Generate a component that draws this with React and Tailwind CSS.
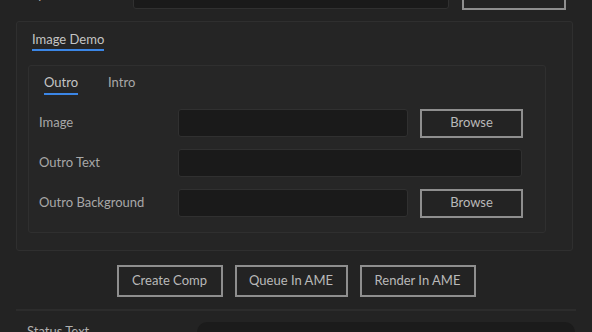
import React from "react";

const font = { fontFamily: "Lato, 'Noto Sans', sans-serif" };

function Btn({ children, className = "" }) {
  return (
    <div
      className={`flex items-center justify-center border-2 border-[#8e8e8e] bg-[#232323] text-[13px] text-[#b9b9b9] ${className}`}
    >
      {children}
    </div>
  );
}

function Input({ className = "" }) {
  return <div className={`h-[28px] rounded-[3px] border border-[#303030] bg-[#1a1a1a] ${className}`} />;
}

export default function App() {
  return (
    <div className="h-[332px] w-[592px] overflow-hidden bg-[#232323]" style={font}>
      {/* top row (cut off) */}
      <div className="mt-[-19px] flex h-[28px] items-center pl-[16px]">
        <div className="w-[117px] text-[13px] text-[#b0b0b0]">Output File</div>
        <Input className="w-[316px]" />
        <Btn className="ml-[13px] h-[30px] w-[104px]">Browse</Btn>
      </div>

      {/* group box */}
      <div className="ml-[16px] mt-[12px] h-[230px] w-[557px] rounded-[3px] border border-[#2f2f2f] bg-[#252525]">
        <div className="flex pl-[15px] pt-[9px]">
          <div className="flex flex-col">
            <span className="text-[13px] leading-[17px] text-[#c4c4c4]">Image Demo</span>
            <div className="mt-[1px] h-[2px] w-full bg-[#3b86e6]" />
          </div>
        </div>

        {/* inner box */}
        <div className="ml-[11px] mt-[14px] h-[168px] w-[518px] rounded-[3px] border border-[#2f2f2f] bg-[#262626]">
          <div className="flex gap-[30px] pl-[15px] pt-[8px]">
            <div className="flex flex-col">
              <span className="text-[13px] leading-[17px] text-[#c4c4c4]">Outro</span>
              <div className="mt-[2px] h-[2px] w-full bg-[#3b86e6]" />
            </div>
            <span className="text-[13px] leading-[17px] text-[#a8a8a8]">Intro</span>
          </div>

          <div className="mt-[14px] flex flex-col gap-[12px] pl-[10px]">
            <div className="flex h-[28px] items-center">
              <div className="w-[139px] text-[13px] text-[#a8a8a8]">Image</div>
              <Input className="w-[230px]" />
              <Btn className="ml-[12px] h-[29px] w-[103px]">Browse</Btn>
            </div>
            <div className="flex h-[28px] items-center">
              <div className="w-[139px] text-[13px] text-[#a8a8a8]">Outro Text</div>
              <Input className="w-[344px]" />
            </div>
            <div className="flex h-[28px] items-center">
              <div className="w-[139px] text-[13px] text-[#a8a8a8]">Outro Background</div>
              <Input className="w-[230px]" />
              <Btn className="ml-[12px] h-[29px] w-[103px]">Browse</Btn>
            </div>
          </div>
        </div>
      </div>

      {/* action buttons */}
      <div className="mt-[14px] flex justify-center gap-[12px]">
        <Btn className="h-[32px] w-[106px]">Create Comp</Btn>
        <Btn className="h-[32px] w-[113px]">Queue In AME</Btn>
        <Btn className="h-[32px] w-[116px]">Render In AME</Btn>
      </div>

      <div className="ml-[16px] mt-[12px] h-[2px] w-[560px] bg-[#2c2c2c]" />

      <div className="mt-[11px] flex items-start pl-[27px]">
        <div className="w-[170px] pt-[1px] text-[13px] leading-[17px] text-[#b0b0b0]">Status Text</div>
        <div className="h-[40px] w-[378px] rounded-[10px] bg-[#1b1b1b]" />
      </div>
    </div>
  );
}
